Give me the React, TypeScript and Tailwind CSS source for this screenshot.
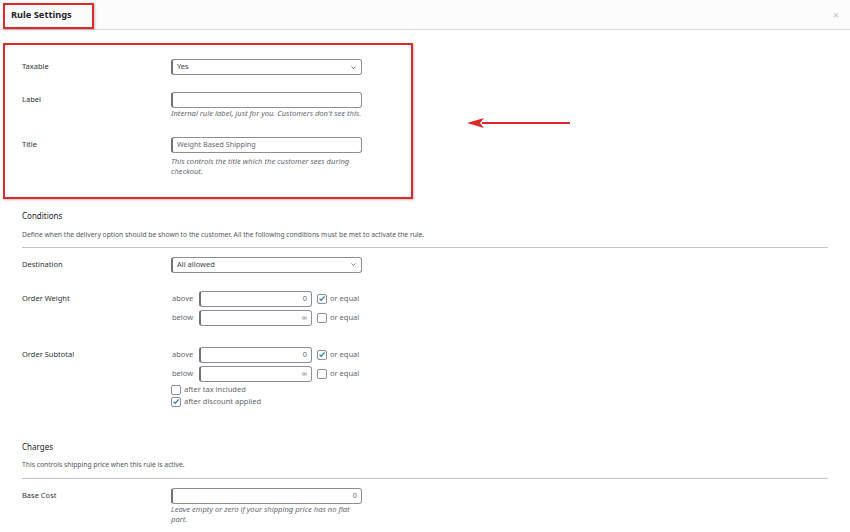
import React from 'react';

function Check({ checked }: { checked?: boolean }) {
  return (
    <span className="w-[10px] h-[10px] border border-[#8c8f94] rounded-[2px] bg-white flex items-center justify-center shrink-0">
      {checked && (
        <svg viewBox="0 0 10 10" className="w-[9px] h-[9px]">
          <path d="M2 5.2 L4.1 7.3 L8.2 2.4" fill="none" stroke="#2271b1" strokeWidth="1.5" />
        </svg>
      )}
    </span>
  );
}

function Select({ value }: { value: string }) {
  return (
    <div className="w-[191px] h-[16px] border border-[#8c8f94] border-l-2 border-l-[#6f7277] rounded-[3px] bg-white flex items-center justify-between pl-[4px] pr-[4px]">
      <span className="text-[7.5px] text-[#3c434a]">{value}</span>
      <svg viewBox="0 0 10 10" className="w-[7px] h-[7px]">
        <path d="M2 3.5 L5 6.5 L8 3.5" fill="none" stroke="#50575e" strokeWidth="1.1" />
      </svg>
    </div>
  );
}

function TextInput({ value, right, w = 'w-[191px]' }: { value?: string; right?: boolean; w?: string }) {
  return (
    <div
      className={`${w} h-[16px] border border-[#8c8f94] border-l-2 border-l-[#6f7277] rounded-[3px] bg-white flex items-center px-[4px] ${right ? 'justify-end' : 'justify-start'}`}
    >
      <span className="text-[7.25px] text-[#646970]">{value}</span>
    </div>
  );
}

function Help({ children }: { children: React.ReactNode }) {
  return <p className="w-[191px] text-[7.6px] leading-[10.5px] italic text-[#646970]">{children}</p>;
}

function Range({ label, value, checked }: { label: string; value: string; checked?: boolean }) {
  return (
    <div className="flex items-center h-[16px]">
      <span className="w-[28px] text-[7.5px] text-[#646970] pl-[1px]">{label}</span>
      <TextInput value={value} right w="w-[113px]" />
      <span className="ml-[5px]"><Check checked={checked} /></span>
      <span className="ml-[3px] text-[7.5px] text-[#646970]">or equal</span>
    </div>
  );
}

function Label({ children }: { children: React.ReactNode }) {
  return <div className="w-[149px] h-[16px] flex items-center text-[7.5px] text-[#2c3338]">{children}</div>;
}

export default function App() {
  return (
    <div className="relative w-[850px] h-[532px] bg-white overflow-hidden font-['Noto_Sans',sans-serif]">
      <header className="h-[30px] bg-[#fcfcfc] border-b border-[#dcdcde] flex items-center justify-between pl-[11px] pr-[11px]">
        <h1 className="text-[9.25px] font-bold text-[#1d2327]">Rule Settings</h1>
        <span className="text-[11px] leading-none text-[#c3c4c7]">×</span>
      </header>

      <div className="pl-[22px] pr-[22px]">
        <div className="flex mt-[29px]">
          <Label>Taxable</Label>
          <Select value="Yes" />
        </div>

        <div className="flex mt-[17px]">
          <Label>Label</Label>
          <div>
            <TextInput />
            <Help>Internal rule label, just for you. Customers don't see this.</Help>
          </div>
        </div>

        <div className="flex mt-[18px]">
          <Label>Title</Label>
          <div>
            <TextInput value="Weight Based Shipping" />
            <div className="mt-[3px]">
              <Help>This controls the title which the customer sees during checkout.</Help>
            </div>
          </div>
        </div>

        <h2 className="mt-[33px] text-[8px] leading-[12px] text-[#1d2327]">Conditions</h2>
        <p className="mt-[8px] text-[6.75px] leading-[10px] text-[#50575e]">
          Define when the delivery option should be shown to the customer. All the following conditions must be met to activate the rule.
        </p>
        <div className="mt-[7px] border-t border-[#c3c4c7]" />

        <div className="flex mt-[9px]">
          <Label>Destination</Label>
          <Select value="All allowed" />
        </div>

        <div className="flex mt-[18px]">
          <Label>Order Weight</Label>
          <div className="flex flex-col gap-[3px]">
            <Range label="above" value="0" checked />
            <Range label="below" value="∞" />
          </div>
        </div>

        <div className="flex mt-[21px]">
          <Label>Order Subtotal</Label>
          <div className="flex flex-col">
            <div className="flex flex-col gap-[3px]">
              <Range label="above" value="0" checked />
              <Range label="below" value="∞" />
            </div>
            <div className="flex items-center gap-[3px] mt-[3px] h-[10px]">
              <Check />
              <span className="text-[7.5px] text-[#646970]">after tax included</span>
            </div>
            <div className="flex items-center gap-[3px] mt-[2px] h-[10px]">
              <Check checked />
              <span className="text-[7.5px] text-[#646970]">after discount applied</span>
            </div>
          </div>
        </div>

        <h2 className="mt-[34px] text-[8px] leading-[12px] text-[#1d2327]">Charges</h2>
        <p className="mt-[7px] text-[6.75px] leading-[10px] text-[#50575e]">This controls shipping price when this rule is active.</p>
        <div className="mt-[8px] border-t border-[#c3c4c7]" />

        <div className="flex mt-[9px]">
          <Label>Base Cost</Label>
          <div>
            <TextInput value="0" right />
            <Help>Leave empty or zero if your shipping price has no flat part.</Help>
          </div>
        </div>
      </div>

      {/* annotations */}
      <div className="absolute left-[3px] top-[3px] w-[91px] h-[26px] border-2 border-[#e3262a] shadow-[1px_1px_2px_rgba(0,0,0,0.25)]" />
      <div className="absolute left-[3px] top-[43px] w-[410px] h-[156px] border-2 border-[#e3262a] shadow-[1px_1px_2px_rgba(0,0,0,0.25)]" />
      <svg className="absolute left-[462px] top-[115px] w-[112px] h-[16px]" viewBox="0 0 112 16">
        <line x1="20" y1="8" x2="108" y2="8" stroke="#e3262a" strokeWidth="2" />
        <path d="M5 8 L22 3 L18 8 L22 13 Z" fill="#e3262a" />
      </svg>
    </div>
  );
}
